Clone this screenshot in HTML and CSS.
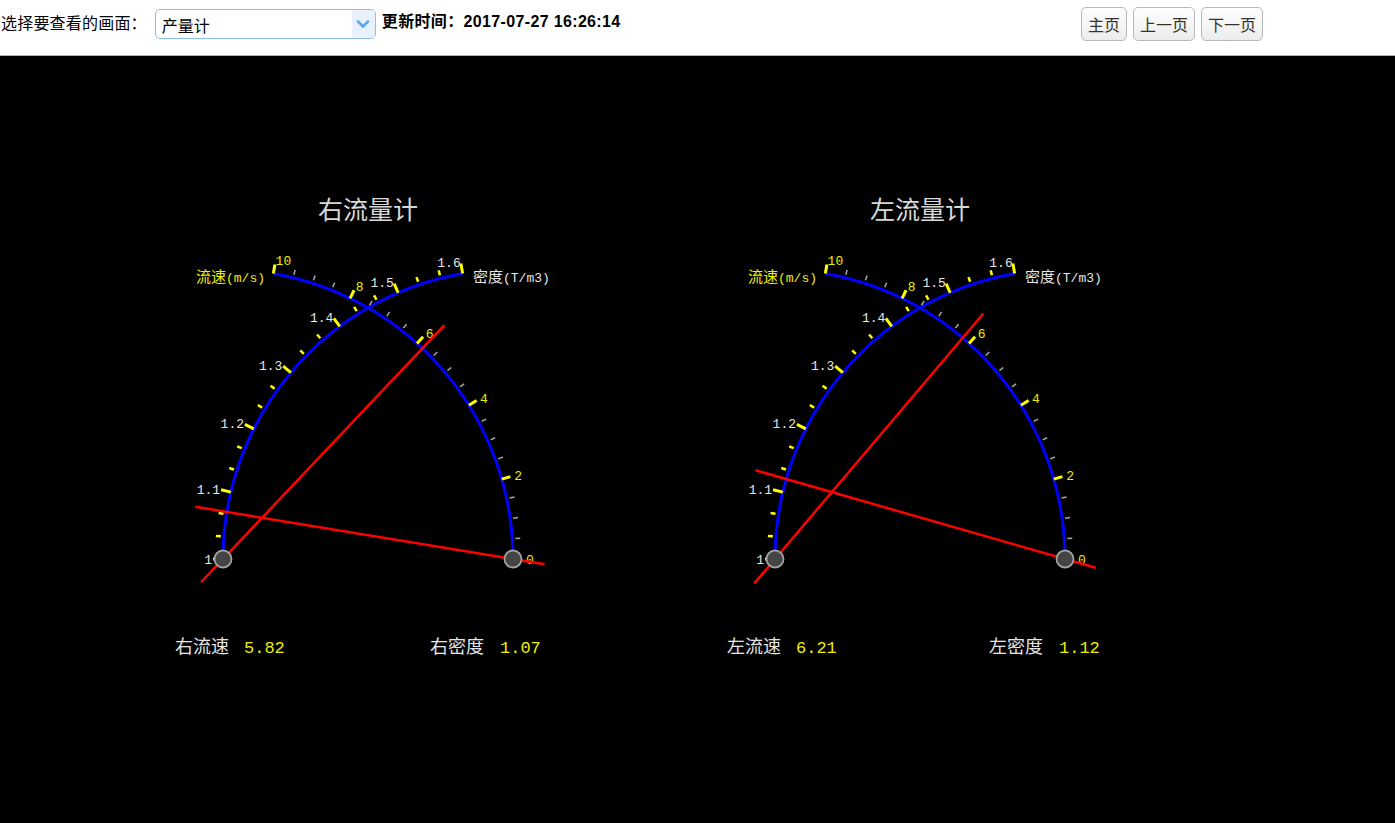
FILE: index.html
```html
<!DOCTYPE html>
<html lang="zh">
<head>
<meta charset="utf-8">
<title>产量计</title>
<link rel="stylesheet" href="styles.css">
</head>
<body>
<header class="topbar">
  <span class="pick-label">选择要查看的画面：</span>
  <div class="select">
    <span class="select-text">产量计</span>
    <span class="select-arrow">
      <svg width="14" height="10" viewBox="0 0 14 10"><path d="M2 2.5 L7 7.5 L12 2.5" fill="none" stroke="#5fa6ea" stroke-width="2.6" stroke-linecap="round" stroke-linejoin="round"/></svg>
    </span>
  </div>
  <span class="update-time">更新时间：2017-07-27 16:26:14</span>
  <nav class="nav-buttons">
    <button class="btn">主页</button>
    <button class="btn">上一页</button>
    <button class="btn">下一页</button>
  </nav>
</header>
<main class="stage">
  <svg id="gauges" class="gauges" width="1395" height="767" viewBox="0 0 1395 767"></svg>
</main>
<script src="script.js"></script>
</body>
</html>
```
FILE: styles.css
```css
html, body {
  margin: 0;
  padding: 0;
  background: #000;
}
body {
  width: 1395px;
  height: 823px;
  overflow: hidden;
  font-family: "Liberation Sans", "Noto Sans CJK SC", sans-serif;
}
.topbar {
  display: flex;
  align-items: flex-start;
  height: 55px;
  background: #fff;
  border-bottom: 1px solid #9cb6d4;
  box-sizing: content-box;
}
.pick-label {
  margin: 13px 0 0 1px;
  font-size: 16px;
  line-height: 18px;
  color: #000;
  font-family: "Noto Sans CJK SC", sans-serif;
  letter-spacing: 0.2px;
}
.select {
  display: flex;
  align-items: stretch;
  margin: 9px 0 0 8px;
  width: 219px;
  height: 28px;
  border: 1px solid #8fbcec;
  border-radius: 5px;
  background: #fff;
  overflow: hidden;
}
.select-text {
  flex: 1;
  padding: 5px 0 0 6px;
  font-size: 16px;
  line-height: 20px;
  font-family: "Noto Sans CJK SC", sans-serif;
  color: #000;
}
.select-arrow {
  width: 23px;
  background: #e8f1fc;
  display: flex;
  align-items: center;
  justify-content: center;
}
.update-time {
  margin: 13px 0 0 6px;
  font-size: 16px;
  line-height: 18px;
  font-weight: bold;
  color: #000;
  letter-spacing: 0.35px;
  font-family: "Liberation Sans", "Noto Sans CJK SC", sans-serif;
}
.nav-buttons {
  display: flex;
  gap: 6px;
  margin: 7px 132px 0 auto;
}
.btn {
  height: 34px;
  padding: 0 6px;
  border: 1px solid #b8b8b8;
  border-radius: 5px;
  background: linear-gradient(#ffffff, #ececec);
  font-family: "Noto Sans CJK SC", sans-serif;
  font-size: 16px;
  color: #333;
  line-height: 20px;
}
.stage {
  display: block;
  height: 767px;
  background: #000;
}
.gauges {
  display: block;
}
.title {
  font-family: "Noto Sans CJK SC", sans-serif;
  font-size: 25px;
  fill: #d8d8d8;
}
.tick-label {
  font-family: "Liberation Mono", "Noto Sans CJK SC", monospace;
  font-size: 13px;
}
.yel { fill: #eeee00; }
.wht { fill: #e6e6e6; }
.unit {
  font-family: "Noto Sans CJK SC", sans-serif;
  font-size: 15px;
}
.unit-latin {
  font-family: "Liberation Mono", monospace;
  font-size: 13px;
}
.reading {
  font-family: "Noto Sans CJK SC", sans-serif;
  font-size: 18px;
}
.reading-val {
  font-family: "Liberation Mono", monospace;
  font-size: 17px;
}
```
FILE: script.js
```js
(function () {
  var NS = 'http://www.w3.org/2000/svg';
  var svg = document.getElementById('gauges');
  var R0 = 290, CY = 503;
  function el(tag, attrs, parent, text) {
    var e = document.createElementNS(NS, tag);
    for (var k in attrs) e.setAttribute(k, attrs[k]);
    if (text !== undefined) e.textContent = text;
    (parent || svg).appendChild(e);
    return e;
  }
  function pt(cx, cy, r, deg) {
    var a = deg * Math.PI / 180;
    return [cx + r * Math.cos(a), cy - r * Math.sin(a)];
  }
  function line(g, p1, p2, stroke, w) {
    el('line', { x1: p1[0].toFixed(2), y1: p1[1].toFixed(2), x2: p2[0].toFixed(2), y2: p2[1].toFixed(2), stroke: stroke, 'stroke-width': w }, g);
  }
  function gauge(ox, side, vel, den, denOff) {
    var g = el('g', {});
    var L = [ox, CY], R = [ox + R0, CY];
    el('text', { x: ox + 145, y: 163, 'text-anchor': 'middle', 'class': 'title' }, g, side + '流量计');

    // arcs
    var vEnd = pt(L[0], L[1], R0, 80);
    el('path', { d: 'M' + R[0] + ' ' + R[1] + ' A290 290 0 0 0 ' + vEnd[0].toFixed(2) + ' ' + vEnd[1].toFixed(2), fill: 'none', stroke: '#0000ff', 'stroke-width': 3 }, g);
    var dEnd = pt(R[0], R[1], R0, 100);
    el('path', { d: 'M' + L[0] + ' ' + L[1] + ' A290 290 0 0 1 ' + dEnd[0].toFixed(2) + ' ' + dEnd[1].toFixed(2), fill: 'none', stroke: '#0000ff', 'stroke-width': 3 }, g);

    // velocity ticks
    for (var i = 0; i <= 20; i++) {
      var a = i * 0.5 * 8;
      if (i % 4 === 0) {
        line(g, pt(L[0], L[1], R0, a), pt(L[0], L[1], R0 + 9, a), '#ffff00', 3);
        var lp = pt(L[0], L[1], R0 + 13, a);
        el('text', { x: lp[0].toFixed(1), y: (lp[1] + 4.5).toFixed(1), 'class': 'tick-label yel' }, g, String(i / 2));
      } else {
        line(g, pt(L[0], L[1], R0 + 3, a), pt(L[0], L[1], R0 + 8, a), '#a8a8a8', 1.5);
      }
    }
    // density ticks
    for (var j = 0; j <= 18; j++) {
      var b = 180 - j * (80 / 18);
      if (j % 3 === 0) {
        line(g, pt(R[0], R[1], R0, b), pt(R[0], R[1], R0 + 10, b), '#ffff00', 3);
        var lq = pt(R[0], R[1], R0 + 11, b);
        var lab = j === 0 ? '1' : (1 + j / 30).toFixed(1);
        el('text', { x: lq[0].toFixed(1), y: (lq[1] + 4.5).toFixed(1), 'text-anchor': 'end', 'class': 'tick-label wht' }, g, lab);
      } else {
        line(g, pt(R[0], R[1], R0 + 3, b), pt(R[0], R[1], R0 + 8, b), '#ffff00', 2.5);
      }
    }

    // unit labels
    var u1 = el('text', { x: L[0] + 42, y: 226, 'text-anchor': 'end', 'class': 'yel' }, g);
    el('tspan', { 'class': 'unit' }, u1, '流速');
    el('tspan', { 'class': 'unit-latin' }, u1, '(m/s)');
    var u2 = el('text', { x: R[0] - 40, y: 226, 'class': 'wht' }, g);
    el('tspan', { 'class': 'unit' }, u2, '密度');
    el('tspan', { 'class': 'unit-latin' }, u2, '(T/m3)');

    // needles
    var va = vel * 8;
    line(g, pt(L[0], L[1], -32, va), pt(L[0], L[1], 322, va), '#ff0000', 2.5);
    var da = 180 - (den - 1) * (80 / 0.6);
    line(g, pt(R[0], R[1], -32, da), pt(R[0], R[1], 322, da), '#ff0000', 2.5);

    // pivots
    el('circle', { cx: L[0], cy: L[1], r: 8.5, fill: '#444', stroke: '#a0a0a0', 'stroke-width': 1.8 }, g);
    el('circle', { cx: R[0], cy: R[1], r: 8.5, fill: '#444', stroke: '#a0a0a0', 'stroke-width': 1.8 }, g);

    // readings
    var t1 = el('text', { x: L[0] - 48, y: 597 }, g);
    el('tspan', { 'class': 'reading wht' }, t1, side + '流速');
    el('tspan', { 'class': 'reading-val yel', dx: 15 }, t1, vel.toFixed(2));
    var t2 = el('text', { x: R[0] - denOff, y: 597 }, g);
    el('tspan', { 'class': 'reading wht' }, t2, side + '密度');
    el('tspan', { 'class': 'reading-val yel', dx: 16 }, t2, den.toFixed(2));
  }
  gauge(223, '右', 5.82, 1.07, 83);
  gauge(775, '左', 6.21, 1.12, 76);
})();
```
